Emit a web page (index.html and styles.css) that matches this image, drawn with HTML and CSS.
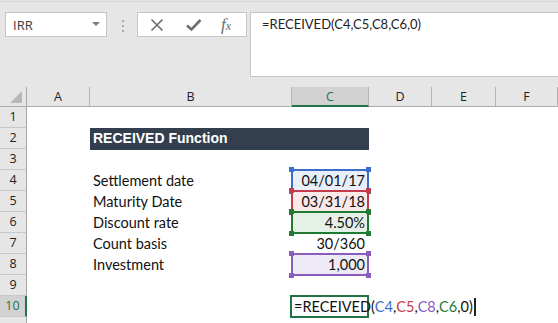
FILE: index.html
```html
<!DOCTYPE html>
<html>
<head>
<meta charset="utf-8">
<link rel="stylesheet" href="styles.css">
</head>
<body>
<div class="bar">
  <div class="namebox"><span class="name">IRR</span><span class="caret"></span></div>
  <div class="grip"><i></i><i></i><i></i></div>
  <div class="btns">
    <svg class="ico" width="14" height="14" viewBox="0 0 14 14"><path d="M1.5 1.5L12.5 12.5M12.5 1.5L1.5 12.5" stroke="#707070" stroke-width="1.7" fill="none"/></svg>
    <svg class="ico" width="16" height="14" viewBox="0 0 16 14"><path d="M1 7.5L5.5 11.5L14.5 2" stroke="#707070" stroke-width="2.6" fill="none"/></svg>
    <span class="fx"><i class="f">f</i><i class="x">x</i></span>
  </div>
  <div class="fbar">=RECEIVED(C4,C5,C8,C6,0)</div>
</div>
<div class="sheet">
  <div class="corner"><span class="tri"></span></div>
  <div class="ch">A</div><div class="ch">B</div><div class="ch sel">C</div><div class="ch">D</div><div class="ch">E</div><div class="ch">F</div>

  <div class="rh">1</div><div class="c"></div><div class="c"></div><div class="c"></div><div class="c"></div><div class="c"></div><div class="c"></div>

  <div class="rh">2</div><div class="c"></div><div class="c title">RECEIVED Function</div><div class="c title"></div><div class="c"></div><div class="c"></div><div class="c"></div>

  <div class="rh">3</div><div class="c"></div><div class="c"></div><div class="c"></div><div class="c"></div><div class="c"></div><div class="c"></div>

  <div class="rh">4</div><div class="c"></div><div class="c">Settlement date</div><div class="c num ref blue">04/01/17<i class="k tl"></i><i class="k tr"></i><i class="k bl"></i><i class="k br"></i></div><div class="c"></div><div class="c"></div><div class="c"></div>

  <div class="rh">5</div><div class="c"></div><div class="c">Maturity Date</div><div class="c num ref red">03/31/18<i class="k tl"></i><i class="k tr"></i><i class="k bl"></i><i class="k br"></i></div><div class="c"></div><div class="c"></div><div class="c"></div>

  <div class="rh">6</div><div class="c"></div><div class="c">Discount rate</div><div class="c num ref green">4.50%<i class="k tl"></i><i class="k tr"></i><i class="k bl"></i><i class="k br"></i></div><div class="c"></div><div class="c"></div><div class="c"></div>

  <div class="rh">7</div><div class="c"></div><div class="c">Count basis</div><div class="c num">30/360</div><div class="c"></div><div class="c"></div><div class="c"></div>

  <div class="rh">8</div><div class="c"></div><div class="c">Investment</div><div class="c num ref purple">1,000<i class="k tl"></i><i class="k tr"></i><i class="k bl"></i><i class="k br"></i></div><div class="c"></div><div class="c"></div><div class="c"></div>

  <div class="rh">9</div><div class="c"></div><div class="c"></div><div class="c"></div><div class="c"></div><div class="c"></div><div class="c"></div>

  <div class="rh sel">10</div><div class="c"></div><div class="c"></div><div class="c active"><span class="edit">=RECEIVED(<span class="t-blue">C4</span>,<span class="t-red">C5</span>,<span class="t-purple">C8</span>,<span class="t-green">C6</span>,0)<span class="cursor"></span></span></div><div class="c"></div><div class="c"></div><div class="c"></div>

  <div class="rh"></div><div class="c"></div><div class="c"></div><div class="c"></div><div class="c"></div><div class="c"></div><div class="c"></div>
</div>
</body>
</html>
```

FILE: styles.css
```css
* { box-sizing: border-box; }
html, body { margin: 0; padding: 0; }
body {
  width: 558px;
  height: 323px;
  overflow: hidden;
  background: #e6e6e6;
  font-family: "Open Sans", "Noto Sans", sans-serif;
}
.bar {
  margin-top: 1px;
  border-top: 1px solid #d6d6d6;
  height: 86px;
  padding: 10px 0 0 5px;
  display: flex;
  align-items: flex-start;
  background: #e6e6e6;
}
.namebox {
  width: 102px;
  height: 25px;
  background: #fff;
  border: 1px solid #c6c6c6;
  display: flex;
  align-items: center;
  justify-content: space-between;
  padding: 0 6px 0 7px;
}
.name {
  font-size: 13px;
  color: #3a3a3a;
}
.caret {
  width: 0;
  height: 0;
  border-left: 4px solid transparent;
  border-right: 4px solid transparent;
  border-top: 4px solid #7a7a7a;
  margin-top: -2px;
}
.grip {
  width: 2px;
  margin: 8px 0 0 15px;
  display: flex;
  flex-direction: column;
  gap: 3px;
}
.grip i {
  display: block;
  width: 2px;
  height: 2px;
  background: #a8a8a8;
}
.btns {
  margin-left: 13px;
  width: 110px;
  height: 25px;
  background: #fff;
  border: 1px solid #c6c6c6;
  display: flex;
  align-items: center;
  padding-left: 12px;
  gap: 22px;
}
.ico { display: block; }
.fx {
  font-family: "Liberation Serif", "DejaVu Serif", serif;
  color: #6a6a6a;
  display: flex;
  align-items: baseline;
  margin-left: -3px;
}
.fx .f { font-size: 17px; font-style: italic; }
.fx .x { font-size: 12px; font-style: italic; margin-left: 0px; }
.fbar {
  margin-left: 3px;
  flex: 1;
  height: 65px;
  background: #fff;
  border: 1px solid #c6c6c6;
  border-right: none;
  padding: 3px 0 0 11px;
  font-family: "Lato", "Open Sans", sans-serif;
  font-size: 13px;
  color: #222;
}
.sheet {
  display: grid;
  grid-template-columns: 27px 63px 202px 77px 63px 64px 1fr;
  grid-template-rows: 20px repeat(11, 21px);
  background: #fff;
}
.corner {
  background: #e6e6e6;
  border-right: 1px solid #a8a8a8;
  border-bottom: 1px solid #ababab;
  position: relative;
}
.tri {
  position: absolute;
  right: 4px;
  bottom: 3px;
  width: 0;
  height: 0;
  border-left: 12px solid transparent;
  border-bottom: 12px solid #b8b8b8;
}
.ch {
  background: #e6e6e6;
  border-right: 1px solid #b4b4b4;
  border-bottom: 1px solid #ababab;
  text-align: center;
  font-size: 12.5px;
  line-height: 19px;
  color: #222;
}
.ch.sel {
  background: #d2d2d2;
  color: #217346;
  border-bottom: 2px solid #217346;
}
.rh {
  background: #e6e6e6;
  border-right: 1px solid #a8a8a8;
  border-bottom: 1px solid #c8c8c8;
  text-align: center;
  font-size: 12.5px;
  line-height: 20px;
  color: #222;
}
.rh.sel {
  background: #d2d2d2;
  color: #217346;
  border-right: 2px solid #217346;
}
.c {
  position: relative;
  font-family: "Lato", "Open Sans", sans-serif;
  font-size: 14.5px;
  line-height: 21px;
  color: #111;
  padding: 0 3px;
  white-space: nowrap;
}
.c.title {
  background: #333f4f;
  color: #fff;
  font-family: "Liberation Sans", Arial, sans-serif;
  font-weight: bold;
  font-size: 14px;
  margin-bottom: -1px;
}
.c.num { text-align: right; padding-right: 4px; }
.ref { z-index: 1; }
.ref::before {
  content: "";
  position: absolute;
  top: -1px;
  left: -1px;
  right: 0;
  bottom: -1px;
  border: 2px solid;
  border-color: inherit;
}
.blue { background: #e8eff9; border-color: #3a6ec8; }
.red { background: #fbe8e8; border-color: #c43b4b; z-index: 2; }
.green { background: #e5f1e6; border-color: #1e7b34; z-index: 3; }
.purple { background: #efebf6; border-color: #8a5cc0; }
.k {
  position: absolute;
  width: 5px;
  height: 5px;
  z-index: 2;
}
.blue .k { background: #3a6ec8; }
.red .k { background: #c43b4b; }
.green .k { background: #1e7b34; }
.purple .k { background: #8a5cc0; }
.k.tl { top: -3px; left: -3px; }
.k.tr { top: -3px; right: -2px; }
.k.bl { bottom: -3px; left: -3px; }
.k.br { bottom: -3px; right: -2px; }
.active { padding-left: 2px; }
.active::before {
  content: "";
  position: absolute;
  top: -1px;
  left: -2px;
  right: 0;
  bottom: -1px;
  border: 2px solid #217346;
}
.edit {
  position: relative;
  z-index: 1;
  display: inline-flex;
  align-items: center;
}
.t-blue { color: #3a6ec8; }
.t-red { color: #c43b4b; }
.t-purple { color: #8a5cc0; }
.t-green { color: #1e7b34; }
.cursor {
  display: inline-block;
  width: 2px;
  height: 18px;
  background: #222;
  margin-left: 1px;
}
```
